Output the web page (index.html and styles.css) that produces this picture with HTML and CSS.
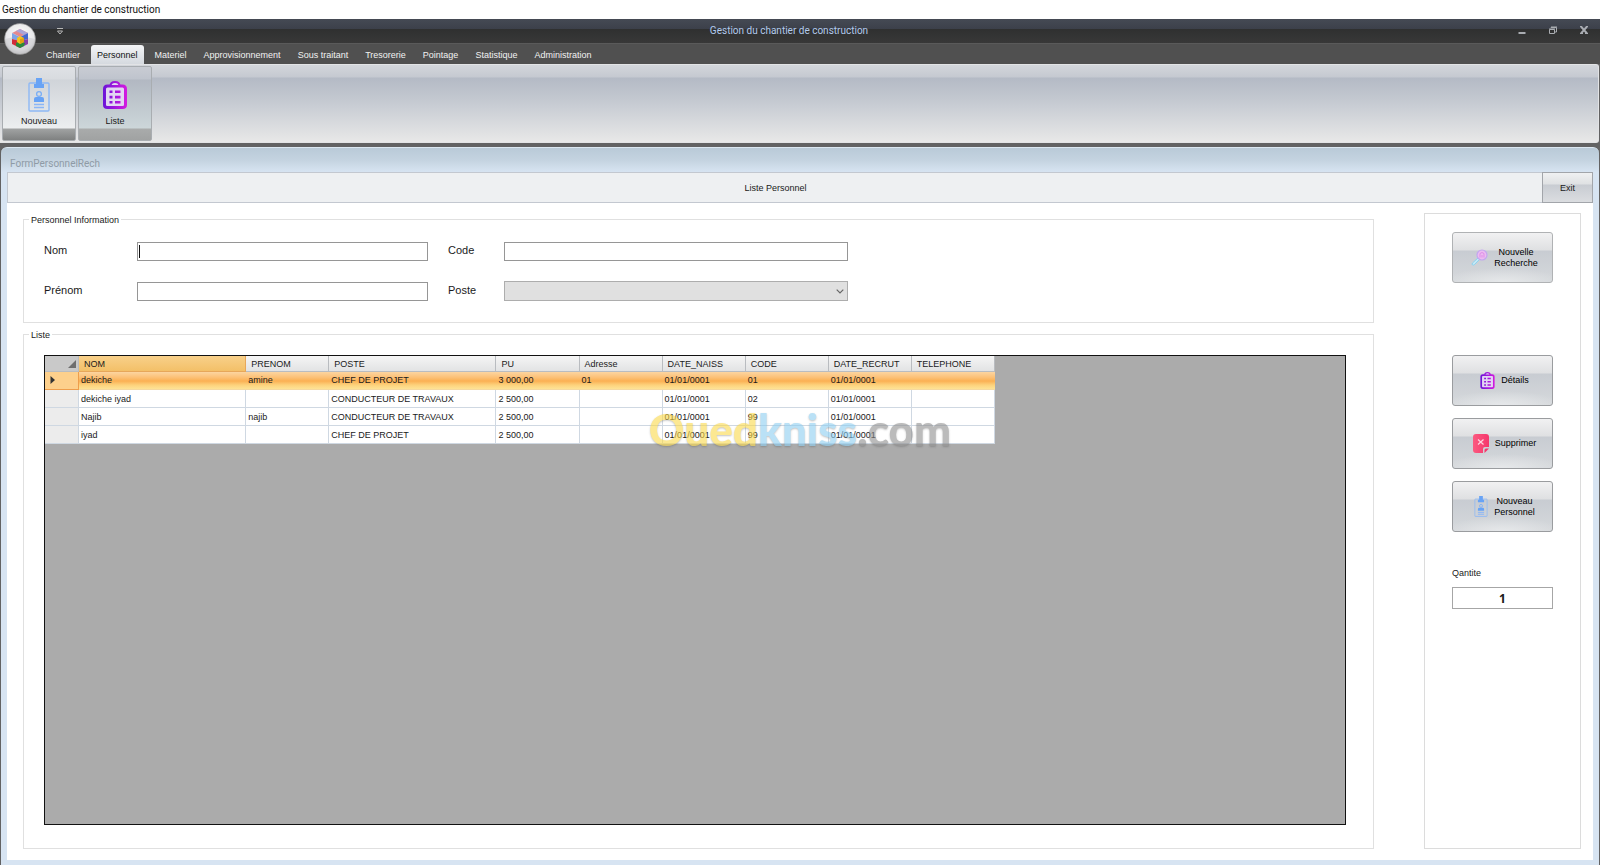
FILE: index.html
```html
<!DOCTYPE html>
<html lang="fr">
<head>
<meta charset="utf-8">
<title>Gestion du chantier de construction</title>
<link rel="stylesheet" href="styles.css">
</head>
<body>
<svg class="defs" aria-hidden="true">
  <defs>
    <linearGradient id="violet" gradientUnits="userSpaceOnUse" x1="0" y1="0" x2="24" y2="0"><stop offset="0" stop-color="#6a14d8"/><stop offset="1" stop-color="#d61be0"/></linearGradient>
    <linearGradient id="pink" x1="0" y1="0" x2="1" y2="0"><stop offset="0" stop-color="#fb5a80"/><stop offset="1" stop-color="#f5366c"/></linearGradient>
    <radialGradient id="orb" cx=".5" cy=".4" r=".6"><stop offset="0" stop-color="#ffffff"/><stop offset=".75" stop-color="#e6e6e8"/><stop offset="1" stop-color="#bcbcbe"/></radialGradient>
    <symbol id="badge" viewBox="0 0 22 34">
      <rect x="1" y="5" width="20" height="28" rx="1" fill="none" stroke="#8db8f5" stroke-width="1.4"/>
      <path d="M8 0h6v6h2v4H6V6h2z" fill="#68a3f5"/>
      <circle cx="11" cy="16" r="2.4" fill="none" stroke="#7aaef6" stroke-width="1.3"/>
      <path d="M6 24v-3q0-2 2-2h6q2 0 2 2v3z" fill="#68a3f5"/>
      <path d="M6 26.500h10M6 29.500h10" stroke="#8ab6f7" stroke-width="1.6"/>
    </symbol>
    <symbol id="clip" viewBox="0 0 24 28">
      <path d="M4.500 5h15q3 0 3 3v16q0 2.500-3 2.500h-15q-3 0-3-2.500V8q0-3 3-3z" fill="#e2d6f2" stroke="url(#violet)" stroke-width="3"/>
      <path d="M7.500 5q0-4 4.500-4t4.500 4z" fill="#e2d6f2" stroke="url(#violet)" stroke-width="2"/>
      <path d="M6.500 9.500h3v2.600h-3zM12 9.500h5.500v2.600H12zM6.500 14.800h3v2.600h-3zM12 14.800h5.500v2.600H12zM6.500 20h3v2.600h-3zM12 20h5.500v2.600H12z" fill="url(#violet)"/>
    </symbol>
  </defs>
</svg>

<div class="caption">Gestion du chantier de construction</div>

<header class="window-head">
  <div class="titlebar">
    <button class="quick" aria-label="Personnaliser"><svg width="6" height="7" viewBox="0 0 6 7"><path d="M0 .5h6M.5 3h5L3 6z" fill="none" stroke="#b8b8b8"/></svg></button>
    <h1 class="app-title">Gestion du chantier de construction</h1>
    <div class="window-buttons">
      <button aria-label="Réduire"><svg width="8" height="8" viewBox="0 0 8 8"><path d="M.5 7h7" stroke="#a9acb1" stroke-width="2"/></svg></button>
      <button aria-label="Restaurer"><svg width="8" height="8" viewBox="0 0 8 8"><path d="M2 2V1.500h5.500V6H6M.5 3.500h5v4h-5z" fill="none" stroke="#a9acb1"/><path d="M0 3h6M2 1h6" stroke="#a9acb1"/></svg></button>
      <button aria-label="Fermer"><svg width="8" height="8" viewBox="0 0 8 8"><path d="M1 .5l6 7M7 .5l-6 7" stroke="#a9acb2" stroke-width="2"/><path d="M0 7.500h3M5 7.500h3M0 .5h2M6 .5h2" stroke="#a9acb2"/></svg></button>
    </div>
  </div>
  <nav class="tabs">
    <a href="#">Chantier</a>
    <a href="#" class="active">Personnel</a>
    <a href="#">Materiel</a>
    <a href="#">Approvisionnement</a>
    <a href="#">Sous traitant</a>
    <a href="#">Tresorerie</a>
    <a href="#">Pointage</a>
    <a href="#">Statistique</a>
    <a href="#">Administration</a>
  </nav>
  <button class="orb" aria-label="Menu">
    <svg width="32" height="32" viewBox="0 0 32 32">
      <circle cx="16" cy="16" r="15.500" fill="url(#orb)" stroke="#8b8b8b" stroke-width=".6"/>
      <path d="M1 16a15 15 0 0 0 30 0q-15-5-30 0z" fill="#c4c4c7" opacity=".45"/>
      <path d="M16 6l8 4-8 4-8-4z" fill="#e4888e"/>
      <path d="M16 6l8 4-4 2-8-4z" fill="#a9a4d8"/>
      <path d="M8 10l8 4v4l-8-2z" fill="#7ea3e6"/>
      <path d="M24 10l-8 4v4l8-2z" fill="#4568cf"/>
      <path d="M8 16l8 2v7l-8-4z" fill="#d22c38"/>
      <path d="M24 16l-8 2v7l8-4z" fill="#8a3fa6"/>
      <path d="M12 20l4-2 5 2-1 3-4 2-4-2z" fill="#2b8a3a"/>
      <path d="M13 15l3-2 4 2v4l-4 2-3-2z" fill="#f5c21c"/>
      <path d="M16 16l4-1v4l-4 2z" fill="#e2a012"/>
    </svg>
  </button>
</header>

<div class="ribbon">
  <button class="ribbon-button light"><svg width="22" height="34"><use href="#badge"/></svg><span>Nouveau</span></button>
  <button class="ribbon-button"><svg width="24" height="28"><use href="#clip"/></svg><span>Liste</span></button>
</div>

<main class="form-window">
  <h2 class="form-title">FormPersonnelRech</h2>
  <div class="form-body">
    <div class="form-bar">
      <h3>Liste Personnel</h3>
      <button class="exit">Exit</button>
    </div>
    <div class="content">
      <div class="left">
        <fieldset class="info">
          <legend>Personnel Information</legend>
          <div class="fields">
            <label for="nom">Nom</label><input id="nom" type="text" autofocus>
            <label for="code" class="second">Code</label><input id="code" type="text">
            <label for="prenom">Prénom</label><input id="prenom" type="text">
            <label for="poste" class="second">Poste</label>
            <div class="combo"><select id="poste"><option></option></select><svg width="8" height="5" viewBox="0 0 8 5"><path d="M.7.7L4 4 7.300.7" fill="none" stroke="#666" stroke-width="1.200"/></svg></div>
          </div>
        </fieldset>
        <fieldset class="list">
          <legend>Liste</legend>
          <div class="grid">
            <table>
              <colgroup><col class="c-head"><col class="c-wide"><col class="c-std"><col class="c-wide"><col class="c-std"><col class="c-std"><col class="c-std"><col class="c-std"><col class="c-std"><col class="c-std"></colgroup>
              <thead>
                <tr><th class="corner"><svg width="8" height="8" viewBox="0 0 8 8"><path d="M8 0v8H0z" fill="#6e6e6e"/></svg></th><th class="sorted">NOM</th><th>PRENOM</th><th>POSTE</th><th>PU</th><th>Adresse</th><th>DATE_NAISS</th><th>CODE</th><th>DATE_RECRUT</th><th>TELEPHONE</th></tr>
              </thead>
              <tbody>
                <tr class="selected"><th><svg width="5" height="8" viewBox="0 0 5 8"><path d="M.5 0L5 4 .5 8z" fill="#333"/></svg></th><td>dekiche</td><td>amine</td><td>CHEF DE PROJET</td><td>3 000,00</td><td>01</td><td>01/01/0001</td><td>01</td><td>01/01/0001</td><td></td></tr>
                <tr><th></th><td>dekiche iyad</td><td></td><td>CONDUCTEUR DE TRAVAUX</td><td>2 500,00</td><td></td><td>01/01/0001</td><td>02</td><td>01/01/0001</td><td></td></tr>
                <tr><th></th><td>Najib</td><td>najib</td><td>CONDUCTEUR DE TRAVAUX</td><td>2 500,00</td><td></td><td>01/01/0001</td><td>99</td><td>01/01/0001</td><td></td></tr>
                <tr><th></th><td>iyad</td><td></td><td>CHEF DE PROJET</td><td>2 500,00</td><td></td><td>01/01/0001</td><td>99</td><td>01/01/0001</td><td></td></tr>
              </tbody>
            </table>
          </div>
        </fieldset>
      </div>
      <aside class="actions">
        <button class="action first"><svg width="17" height="17" viewBox="0 0 17 17"><path d="M7.500 8.500L1.500 14q-1 1.300.2 2 1 .5 2-.6L9 10" fill="#c6e8f5" stroke="#8bd3ef"/><circle cx="11" cy="6" r="5" fill="#ecbcf0" stroke="#c3a6f0" stroke-width="1.200"/><path d="M9 8.500v-4l2-1 2 1v4M11 6v2.500" fill="none" stroke="#df8de9"/></svg><span>Nouvelle<br>Recherche</span></button>
        <button class="action"><svg width="15" height="17" viewBox="0 0 24 28"><use href="#clip"/></svg><span>Détails</span></button>
        <button class="action"><svg width="16" height="20" viewBox="0 0 16 20"><path d="M3 0h10q3 0 3 3v10h-4q-2 0-2 2v4H3q-3 0-3-3V3q0-3 3-3z" fill="url(#pink)"/><path d="M11.500 19v-3q0-1.500 1.500-1.500h3z" fill="#f5366c"/><path d="M5 5.500l5.500 5M10.500 5.500L5 10.500" stroke="#ffd3df" stroke-width="1.200"/></svg><span>Supprimer</span></button>
        <button class="action"><svg width="14" height="21" viewBox="0 0 22 34"><use href="#badge"/></svg><span>Nouveau<br>Personnel</span></button>
        <label for="quantite">Qantite</label>
        <input id="quantite" type="text" value="1">
      </aside>
    </div>
  </div>
</main>

<div class="watermark" aria-hidden="true"><span class="w-yellow">Oued</span><span class="w-blue">kniss</span><span class="w-gray">.com</span></div>
</body>
</html>
```
FILE: styles.css
```css
* { box-sizing: border-box; }

body {
  margin: 0;
  min-height: 100vh;
  display: flex;
  flex-direction: column;
  background: #626263;
  color: #1a1a1a;
  font: 9px/12px "Liberation Sans", Arial, sans-serif;
  position: relative;
}

button, input, select { font: inherit; color: inherit; margin: 0; }
button { border: 0; padding: 0; background: none; }
h1, h2, h3 { margin: 0; font-size: inherit; font-weight: normal; }
.defs { position: absolute; width: 0; height: 0; }

.caption {
  height: 19px;
  padding: 0 2px;
  background: #fff;
  color: #111;
  font: 10px/20px Roboto, sans-serif;
}

.window-head { position: relative; }

.titlebar {
  height: 24px;
  display: grid;
  grid-template-columns: 1fr auto 1fr;
  align-items: center;
  background: linear-gradient(#454a54 0, #3c404a 10px, #2f3030 10px, #383838 24px);
}
.quick { justify-self: start; margin-left: 57px; display: flex; }
.app-title { color: #b3cbee; font: 10px/18px Roboto, sans-serif; padding-right: 22px; }
.window-buttons { justify-self: end; display: flex; gap: 23px; padding: 0 12px 2px 0; }
.window-buttons button { display: flex; }

.tabs {
  height: 21px;
  display: flex;
  align-items: flex-end;
  gap: 5px;
  padding-left: 40px;
  background: #505050;
  border-top: 1px solid #5a5a5a;
}
.tabs a {
  height: 19px;
  padding: 0 6px;
  color: #f2f2f2;
  line-height: 20px;
  text-decoration: none;
}
.tabs .active {
  color: #111;
  background: linear-gradient(#f4f5f6, #d5d9df);
  border-radius: 3px 3px 0 0;
}

.orb { position: absolute; left: 4px; top: 4px; width: 32px; height: 32px; }

.ribbon {
  height: 79px;
  display: flex;
  gap: 2px;
  padding: 1px 2px;
  margin-right: 1px;
  border: 1px solid #e2e3e5;
  border-left: 0;
  border-radius: 0 3px 3px 0;
  background: linear-gradient(#d3d6db 0, #c5c9d1 12px, #b4bac5 13px, #c3c8d0 34px, #e8e8e8 77px);
}
.ribbon-button {
  width: 74px;
  height: 75px;
  padding-bottom: 11px;
  display: flex;
  flex-direction: column;
  align-items: center;
  justify-content: flex-end;
  gap: 4px;
  border: 1px solid #a9adb1;
  border-radius: 2px;
  background: linear-gradient(#c9ccd3 0, #bfc4cd 12px, #b2b8c2 13px, #ccd6d9 61px, #a9abab 62px, #a0a2a2);
}
.ribbon-button.light {
  gap: 1px;
  background: linear-gradient(#dfe1e5 0, #d8dbdf 12px, #d0d4d9 13px, #eceeef 61px, #a0a2a2 62px, #7f8181);
}
.ribbon-button span { line-height: 16px; }

.form-window {
  flex: 1;
  display: flex;
  flex-direction: column;
  margin: 4px 1px 0;
  padding: 0 6px 5px;
  border-top: 1px solid #dce8f2;
  border-radius: 6px 6px 0 0;
  background: linear-gradient(#b9cad8 0, #c4d3e0 12px, #d7e4f2 24px);
}
.form-title {
  height: 24px;
  padding-left: 3px;
  color: #8f9ba6;
  font: 10px/31px Roboto, sans-serif;
}
.form-body { flex: 1; display: flex; flex-direction: column; background: #fff; }

.form-bar {
  height: 31px;
  display: flex;
  background: #eef0f2;
  border: 1px solid #c3c8d0;
}
.form-bar h3 { flex: 1; text-align: center; line-height: 31px; }
.exit {
  width: 51px;
  margin: -1px;
  border: 1px solid #a2a5aa;
  background: linear-gradient(#f0f1f2 0, #dfe1e3 11px, #c8ccd2 12px, #dcdee1 30px);
}

.content { flex: 1; display: flex; gap: 50px; padding: 10px 12px 11px 16px; }
.left { flex: 1; display: flex; flex-direction: column; gap: 5px; }

fieldset {
  min-width: 0;
  margin: 0;
  border: 1px solid #e0e0e0;
}
legend { padding: 1px 2px 0; margin-left: -15px; }
.info { padding: 16px 20px 21px; }
.list { flex: 1; display: flex; flex-direction: column; padding: 14px 27px 23px 20px; }

.fields {
  display: grid;
  grid-template-columns: 93px 291px 76px 344px;
  grid-template-rows: 19px 20px;
  row-gap: 20px;
  align-items: center;
  font-size: 11px;
}
.fields label { padding-bottom: 3px; }
.fields .second { padding-left: 20px; }
.fields input {
  width: 100%;
  height: 19px;
  padding: 0 2px;
  border: 1px solid #969696;
  background: #fff;
  outline: 0;
}
.fields input:focus {
  caret-color: transparent;
  background: #fff linear-gradient(#111, #111) 1px 2px / 1px 13px no-repeat;
}
.combo { position: relative; }
.combo select {
  display: block;
  width: 100%;
  height: 20px;
  border: 1px solid #adadad;
  border-radius: 0;
  background: #e0e0e0;
  appearance: none;
}
.combo svg { position: absolute; right: 4px; top: 8px; pointer-events: none; }

.grid { flex: 1; border: 1px solid #111; background: #ababab; }
table { border-collapse: separate; border-spacing: 0; table-layout: fixed; width: 950px; }
.c-head { width: 34px; }
.c-wide { width: 167px; }
.c-std { width: 83px; }
th, td {
  height: 18px;
  padding: 0 2px;
  overflow: hidden;
  white-space: nowrap;
  font-weight: normal;
  text-align: left;
  line-height: 12px;
  border-right: 1px solid #cfd8e2;
  border-bottom: 1px solid #cfd8e2;
}
td { background: #fff; }
thead th {
  height: 16px;
  padding: 0 5px;
  border-color: #b9bcc0;
  background: linear-gradient(#f5f5f5, #e2e3e4);
}
thead .corner { background: #c9c9c9; text-align: right; padding: 0 2px; }
thead .sorted { background: linear-gradient(#f8d08a, #f3c068); border-color: #e7a75a; }
tbody th { background: #ececec; padding: 0 5px; }
th svg { display: inline-block; vertical-align: middle; }
.selected th, .selected td { padding-bottom: 2px; }
.selected th { background: #fdd08c; border-color: #ee9e4c; }
.selected td {
  border-right: 0;
  border-bottom-color: #f5d9a0;
  background: linear-gradient(#fcd5a0 0, #fcc27a 5px, #fbb053 9px, #fdd27c 13px, #fee79c 18px);
}

.actions {
  width: 157px;
  display: flex;
  flex-direction: column;
  align-items: center;
  padding: 18px 0 0;
  border: 1px solid #dcdcdc;
}
.action {
  width: 101px;
  height: 51px;
  margin-bottom: 12px;
  padding-left: 4px;
  display: flex;
  align-items: center;
  justify-content: center;
  gap: 6px;
  line-height: 11px;
  color: #000;
  border: 1px solid #9a9c9f;
  border-radius: 3px;
  background: radial-gradient(ellipse 60px 14px at 50% 100%, #e6e8ea, rgba(230, 232, 234, 0)), linear-gradient(#f1f1f2 0, #dfe0e2 17px, #c8ccd2 18px, #d6d9dc 50px);
}
.action.first { margin-bottom: 72px; border-color: #b0b2b4; }
.actions label { width: 101px; margin: 23px 0 8px; }
.actions input {
  width: 101px;
  height: 22px;
  text-align: center;
  font: bold 12px/20px "Noto Sans", sans-serif;
  border: 1px solid #a6a6a6;
  background: #fff;
}

.watermark {
  position: absolute;
  inset: 0 0 8px;
  display: flex;
  align-items: center;
  justify-content: center;
  pointer-events: none;
  font: 900 44px/48px Lato, sans-serif;
  opacity: .6;
  text-shadow: 0 1px 2px rgba(90, 90, 90, .6);
}
.w-yellow { color: #fbd94a; }
.w-blue { color: #8ccdf0; }
.w-gray { color: #8e8e8e; }
```
